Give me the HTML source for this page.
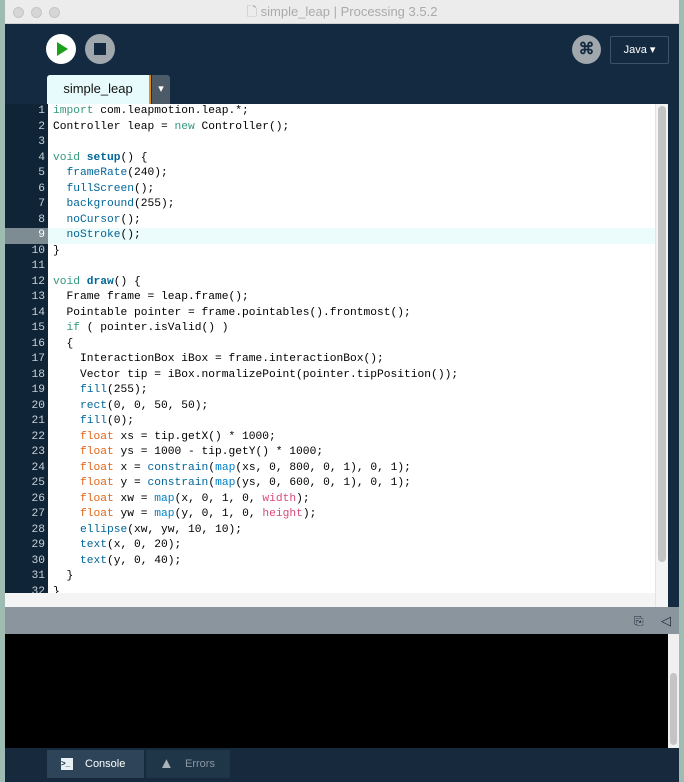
<!DOCTYPE html>
<html><head><style>
*{margin:0;padding:0;box-sizing:border-box}
body{width:684px;height:782px;background:#9fbcb2;position:relative;overflow:hidden;font-family:"Liberation Sans",sans-serif}
.win{position:absolute;left:5px;top:0;width:674px;height:782px;background:#132a40;overflow:hidden}
.title{position:absolute;left:0;top:0;width:674px;height:24px;background:#ececec;border-bottom:1px solid #d0d0d0;text-align:center;font-size:13px;color:#aaa;line-height:24px}
.dot{position:absolute;top:7px;width:11px;height:11px;border-radius:50%;background:#d6d6d6;border:1px solid #c6c6c6}
.code{position:absolute;left:43px;top:104px;width:607px;height:490px;background:#fff;font-family:"Liberation Mono",monospace;font-size:11.25px}
.gut{position:absolute;left:0;top:104px;width:43px;height:490px;background:#0f2436;font-family:"Liberation Mono",monospace;font-size:11.25px;color:#c8d0d6}
.ln{height:15.5px;line-height:15.5px;white-space:pre}
.gut .ln{text-align:right;padding-right:3px}
.code .ln{padding-left:5px}
.k{color:#33997e}.f{color:#006699}.b{color:#006699;font-weight:bold}.o{color:#e2661a}.p{color:#d94a7a}.m{color:#0080c8}
</style></head><body>
<div class="win">
<div class="title"><span class="dot" style="left:8px"></span><span class="dot" style="left:26px"></span><span class="dot" style="left:44px"></span>&#x1F5CB; simple_leap | Processing 3.5.2</div>
<div style="position:absolute;left:41px;top:34px;width:30px;height:30px;border-radius:50%;background:#fff"><div style="position:absolute;left:11px;top:8px;border-left:11px solid #1aa01a;border-top:7px solid transparent;border-bottom:7px solid transparent"></div></div>
<div style="position:absolute;left:80px;top:34px;width:30px;height:30px;border-radius:50%;background:#a0a7ad"><div style="position:absolute;left:9px;top:9px;width:12px;height:12px;background:#132a40"></div></div>
<div style="position:absolute;left:567px;top:35px;width:29px;height:29px;border-radius:50%;background:#a0a7ad;color:#132a40;font-size:16px;font-weight:bold;text-align:center;line-height:29px">⌘</div>
<div style="position:absolute;left:605px;top:36px;width:59px;height:28px;border:1px solid #3d5468;border-radius:2px;color:#fff;font-size:11px;line-height:26px;text-align:center">Java ▾</div>
<div style="position:absolute;left:42px;top:75px;width:104px;height:29px;background:#e8fbfc;border-right:2px solid #e2901a;border-radius:3px 0 0 0;font-size:13px;color:#111;text-align:center;line-height:28px">simple_leap</div>
<div style="position:absolute;left:147px;top:75px;width:18px;height:29px;background:#4d5b69;color:#fff;font-size:11px;text-align:center;line-height:28px;border-radius:0 3px 0 0">▾</div>
<div class="gut">
<div class="ln">1</div><div class="ln">2</div><div class="ln">3</div><div class="ln">4</div><div class="ln">5</div><div class="ln">6</div><div class="ln">7</div><div class="ln">8</div><div class="ln" style="background:#7d8b93;color:#fff">9</div><div class="ln">10</div><div class="ln">11</div><div class="ln">12</div><div class="ln">13</div><div class="ln">14</div><div class="ln">15</div><div class="ln">16</div><div class="ln">17</div><div class="ln">18</div><div class="ln">19</div><div class="ln">20</div><div class="ln">21</div><div class="ln">22</div><div class="ln">23</div><div class="ln">24</div><div class="ln">25</div><div class="ln">26</div><div class="ln">27</div><div class="ln">28</div><div class="ln">29</div><div class="ln">30</div><div class="ln">31</div><div class="ln">32</div>
</div>
<div class="code">
<div class="ln"><span class="k">import</span> com.leapmotion.leap.*;</div>
<div class="ln">Controller leap = <span class="k">new</span> Controller();</div>
<div class="ln"> </div>
<div class="ln"><span class="k">void</span> <span class="b">setup</span>() {</div>
<div class="ln">  <span class="f">frameRate</span>(240);</div>
<div class="ln">  <span class="f">fullScreen</span>();</div>
<div class="ln">  <span class="f">background</span>(255);</div>
<div class="ln">  <span class="f">noCursor</span>();</div>
<div class="ln" style="background:#ecfbfb">  <span class="f">noStroke</span>();</div>
<div class="ln">}</div>
<div class="ln"> </div>
<div class="ln"><span class="k">void</span> <span class="b">draw</span>() {</div>
<div class="ln">  Frame frame = leap.frame();</div>
<div class="ln">  Pointable pointer = frame.pointables().frontmost();</div>
<div class="ln">  <span class="k">if</span> ( pointer.isValid() )</div>
<div class="ln">  {</div>
<div class="ln">    InteractionBox iBox = frame.interactionBox();</div>
<div class="ln">    Vector tip = iBox.normalizePoint(pointer.tipPosition());</div>
<div class="ln">    <span class="f">fill</span>(255);</div>
<div class="ln">    <span class="f">rect</span>(0, 0, 50, 50);</div>
<div class="ln">    <span class="f">fill</span>(0);</div>
<div class="ln">    <span class="o">float</span> xs = tip.getX() * 1000;</div>
<div class="ln">    <span class="o">float</span> ys = 1000 - tip.getY() * 1000;</div>
<div class="ln">    <span class="o">float</span> x = <span class="f">constrain</span>(<span class="m">map</span>(xs, 0, 800, 0, 1), 0, 1);</div>
<div class="ln">    <span class="o">float</span> y = <span class="f">constrain</span>(<span class="m">map</span>(ys, 0, 600, 0, 1), 0, 1);</div>
<div class="ln">    <span class="o">float</span> xw = <span class="m">map</span>(x, 0, 1, 0, <span class="p">width</span>);</div>
<div class="ln">    <span class="o">float</span> yw = <span class="m">map</span>(y, 0, 1, 0, <span class="p">height</span>);</div>
<div class="ln">    <span class="f">ellipse</span>(xw, yw, 10, 10);</div>
<div class="ln">    <span class="f">text</span>(x, 0, 20);</div>
<div class="ln">    <span class="f">text</span>(y, 0, 40);</div>
<div class="ln">  }</div>
<div class="ln">}</div>
</div>
<div style="position:absolute;left:0;top:593px;width:663px;height:14px;background:#f4f4f4"></div>
<div style="position:absolute;left:650px;top:104px;width:13px;height:503px;background:#f4f4f4;border-left:1px solid #e4e4e4"></div>
<div style="position:absolute;left:653px;top:106px;width:8px;height:456px;background:#c4c4c4;border-radius:4px"></div>
<div style="position:absolute;left:0;top:607px;width:674px;height:27px;background:#8a959e"></div>
<div style="position:absolute;left:629px;top:614px;color:#1c2a38;font-size:12px">⎘</div>
<div style="position:absolute;left:656px;top:613px;color:#1c2a38;font-size:13px">◁</div>
<div style="position:absolute;left:0;top:634px;width:674px;height:114px;background:#000"></div>
<div style="position:absolute;left:663px;top:634px;width:11px;height:114px;background:#f0f0f0"></div>
<div style="position:absolute;left:665px;top:673px;width:7px;height:72px;background:#c4c4c4;border-radius:4px"></div>
<div style="position:absolute;left:0;top:748px;width:674px;height:34px;background:#17293d"></div>
<div style="position:absolute;left:42px;top:750px;width:97px;height:28px;background:#2e4458;color:#fff;font-size:11px;line-height:28px;padding-left:38px"><span style="position:absolute;left:14px;top:8px;width:12px;height:12px;background:#e8f0f4;color:#17293d;font-size:8px;line-height:12px;text-align:left;font-weight:bold">&gt;_</span>Console</div>
<div style="position:absolute;left:141px;top:750px;width:84px;height:28px;background:#1f3548;color:#8a98a4;font-size:11px;line-height:28px;padding-left:39px"><span style="position:absolute;left:13px;top:0;font-size:15px;color:#a8b2ba">▲</span>Errors</div>
</div>
</body></html>
